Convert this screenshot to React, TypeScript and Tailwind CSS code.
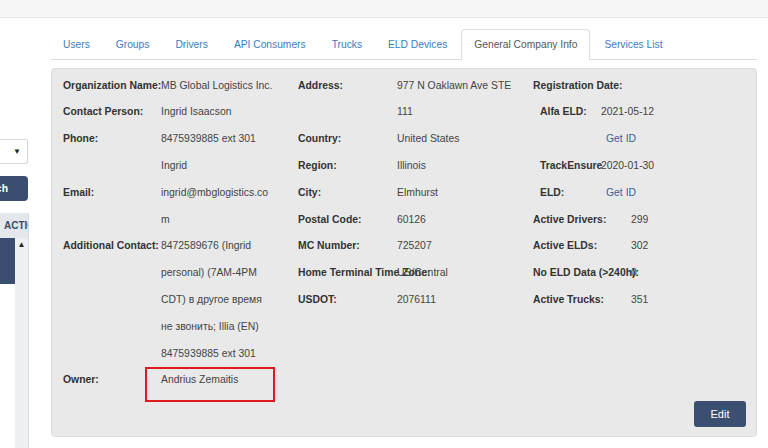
import React from 'react';

type Row = { label?: string; value?: React.ReactNode; sub?: boolean; link?: boolean };

const tabs = ['Users', 'Groups', 'Drivers', 'API Consumers', 'Trucks', 'ELD Devices', 'General Company Info', 'Services List'];

const col1: Row[] = [
  { label: 'Organization Name:', value: 'MB Global Logistics Inc.' },
  { label: 'Contact Person:', value: 'Ingrid Isaacson' },
  { label: 'Phone:', value: '8475939885 ext 301' },
  { value: 'Ingrid' },
  { label: 'Email:', value: 'ingrid@mbglogistics.co' },
  { value: 'm' },
  { label: 'Additional Contact:', value: '8472589676 (Ingrid' },
  { value: 'personal) (7AM-4PM' },
  { value: 'CDT) в другое время' },
  { value: 'не звонить; Illia (EN)' },
  { value: '8475939885 ext 301' },
];

const col2: Row[] = [
  { label: 'Address:', value: '977 N Oaklawn Ave STE' },
  { value: '111' },
  { label: 'Country:', value: 'United States' },
  { label: 'Region:', value: 'Illinois' },
  { label: 'City:', value: 'Elmhurst' },
  { label: 'Postal Code:', value: '60126' },
  { label: 'MC Number:', value: '725207' },
  { label: 'Home Terminal Time Zone:', value: 'US/Central' },
  { label: 'USDOT:', value: '2076111' },
];

const col3: Row[] = [
  { label: 'Alfa ELD:', value: '2021-05-12', sub: true },
  { value: 'Get ID', sub: true, link: true },
  { label: 'TrackEnsure', value: '2020-01-30', sub: true },
  { label: 'ELD:', value: 'Get ID', sub: true, link: true },
  { label: 'Active Drivers:', value: '299' },
  { label: 'Active ELDs:', value: '302' },
  { label: 'No ELD Data (>240h):', value: '0' },
  { label: 'Active Trucks:', value: '351' },
];

const Line = ({ row, labelW, valueW }: { row: Row; labelW: string; valueW: string }) => (
  <div className="flex h-[26.8px] items-center whitespace-nowrap">
    <div className={`${labelW} shrink-0 font-bold text-[#333]`}>{row.label}</div>
    <div className={`${valueW} shrink-0 ${row.link ? 'pl-[5px] text-[#3e5f8f]' : 'text-[#444]'}`}>{row.value}</div>
  </div>
);

export default function App() {
  return (
    <div className="relative h-[448px] w-[768px] overflow-hidden bg-white text-[10.4px] text-[#333]" style={{ fontFamily: '"Liberation Sans", Arial, sans-serif' }}>
      {/* top bar */}
      <div className="h-[18px] border-b border-[#e6e6e6] bg-[#f6f6f6]" />

      <div className="flex h-[430px]">
        {/* sidebar, mostly cut off */}
        <div className="flex w-[29px] shrink-0 flex-col">
          <div className="mt-[121px] flex h-[25px] w-[28px] items-center justify-end rounded-r-[3px] border border-l-0 border-[#d6d6d6] pr-[6px] text-[8px] text-[#222]">▼</div>
          <div className="mt-[12px] flex h-[25px] w-[28px] items-center justify-end overflow-hidden rounded-r-[4px] bg-[#3a4f6f] pr-[20px] font-bold text-white">
            <span className="whitespace-nowrap">Search</span>
          </div>
          <div className="mt-[12px] flex flex-1 flex-col border-r border-[#d9dce1]">
            <div className="flex h-[25px] items-center overflow-hidden whitespace-nowrap bg-[#e4e7ec] pl-[4px] text-[10px] font-bold text-[#3a4a6b]">ACTIONS</div>
            <div className="flex flex-1">
              <div className="h-[46px] w-[15px] bg-[#3a4f6f]" />
              <div className="flex flex-1 justify-center bg-[#eef0f3] pt-[3px] text-[8px] leading-none text-[#222]">▲</div>
            </div>
          </div>
        </div>

        {/* main */}
        <div className="ml-[22px] w-[706px] shrink-0">
          <div className="mt-[11px] flex h-[31px] border-b border-[#dddddd] text-[10.25px]">
            {tabs.map((t) => {
              const active = t === 'General Company Info';
              return (
                <div
                  key={t}
                  className={`mr-[2px] flex h-[31px] items-center whitespace-nowrap px-[12px] ${
                    active ? 'rounded-t-[4px] border border-b-0 border-[#dddddd] bg-white px-[11px] text-[#555]' : 'text-[#3a7cc0]'
                  }`}
                >
                  {t}
                </div>
              );
            })}
          </div>

          <div className="mt-[8px] flex h-[369px] flex-col rounded-[4px] border border-[#dcdcdc] bg-[#e9e9e9] pl-[11px] pr-[10px] pt-[3px] pb-[9px]">
            <div className="flex">
              <div className="w-[137px] shrink-0">
                {col1.map((r, i) => (
                  <Line key={i} row={r} labelW="w-[98px]" valueW="w-[112px]" />
                ))}
                <div className="relative flex h-[26.8px] items-center whitespace-nowrap">
                  <div className="w-[98px] shrink-0 font-bold">Owner:</div>
                  <div className="text-[#444]">Andrius Zemaitis</div>
                  <div className="absolute left-[82px] top-0 h-[35px] w-[130px] border-2 border-[#e0191f]" />
                </div>
              </div>
              <div className="ml-[98px] w-[235px] shrink-0">
                {col2.map((r, i) => (
                  <Line key={i} row={r} labelW="w-[99px]" valueW="w-[120px]" />
                ))}
              </div>
              <div className="w-[200px] shrink-0">
                <div className="flex h-[26.8px] items-center font-bold">Registration Date:</div>
                {col3.map((r, i) => (
                  <div key={i} className={r.sub ? 'pl-[7px]' : ''}>
                    <Line row={r} labelW={r.sub ? 'w-[61px]' : 'w-[98px]'} valueW="w-[80px]" />
                  </div>
                ))}
              </div>
            </div>
            <div className="mt-auto flex justify-end">
              <button className="h-[26px] w-[52px] rounded-[3px] bg-[#3b5070] text-[11px] text-white">Edit</button>
            </div>
          </div>
        </div>
      </div>
    </div>
  );
}
